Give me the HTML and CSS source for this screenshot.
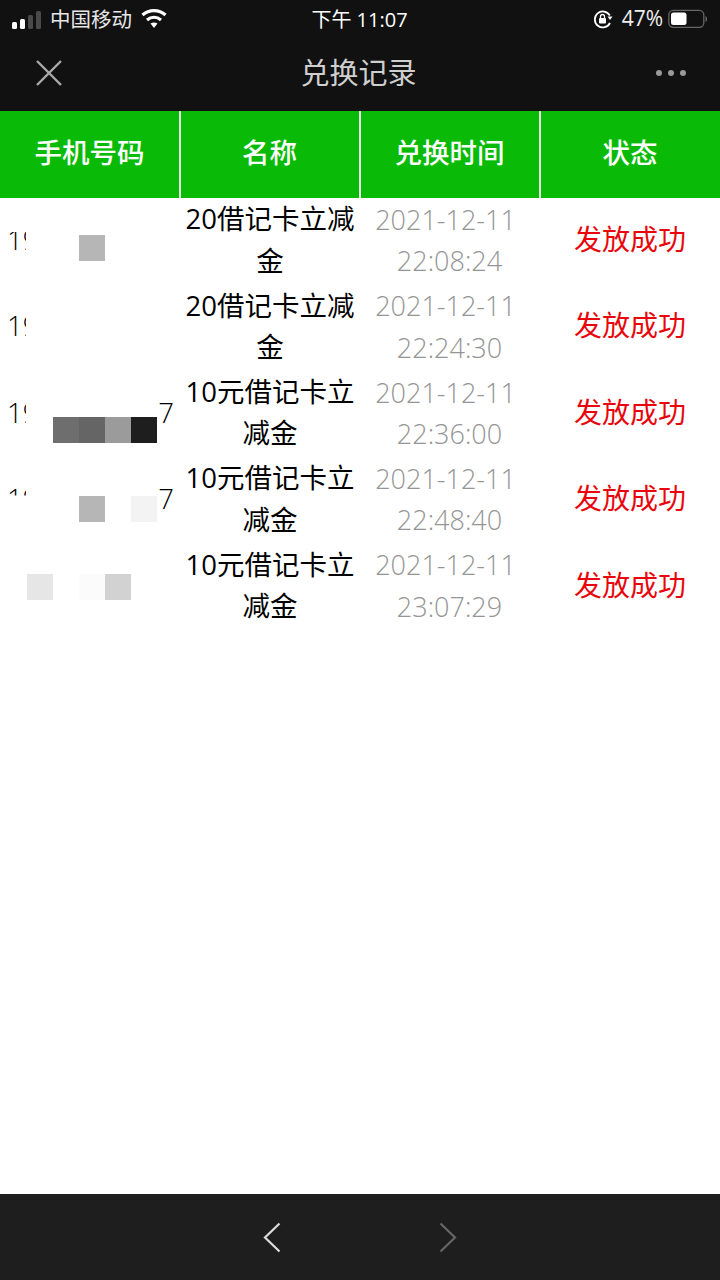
FILE: index.html
```html
<!DOCTYPE html>
<html lang="zh">
<head>
<meta charset="utf-8">
<title>兑换记录</title>
<link rel="stylesheet" href="styles.css">
</head>
<body>
<div class="page">
  <header class="top">
    <div class="status">
      <div class="status-side">
        <svg class="signal" width="30" height="20" viewBox="0 0 30 20"><rect x="0" y="12" width="5" height="7" rx="1.5" fill="#fff"/><rect x="8" y="9" width="5" height="10" rx="1.5" fill="#fff"/><rect x="16" y="5" width="5" height="14" rx="1.5" fill="#4a4a4a"/><rect x="24" y="1" width="5" height="18" rx="1.5" fill="#4a4a4a"/></svg>
        <span class="carrier">中国移动</span>
        <svg class="wifi" width="26" height="21" viewBox="0 0 26 21"><path d="M1.500 7C8 1.200 18 1.200 24.500 7" fill="none" stroke="#fff" stroke-width="3.200"/><path d="M6 12c4.200-3.400 9.800-3.400 14 0" fill="none" stroke="#fff" stroke-width="3.200"/><path d="M9.500 15.500c2.200-1.500 4.800-1.500 7 0L13 20z" fill="#fff"/></svg>
      </div>
      <div class="time">下午 11:07</div>
      <div class="status-side status-right">
        <svg class="lock" width="20" height="20" viewBox="0 0 20 20"><path d="M16.800 6.500A8 8 0 1 0 17 14" fill="none" stroke="#fff" stroke-width="1.800"/><path d="M14.500 7.500h5l-2.500 3.500z" fill="#fff"/><rect x="6" y="9" width="7" height="5.500" rx="1" fill="#fff"/><path d="M7.500 9V7.500a2 2 0 0 1 4 0V9" fill="none" stroke="#fff" stroke-width="1.300"/></svg>
        <span class="percent">47%</span>
        <svg class="battery" width="39" height="20" viewBox="0 0 39 20"><rect x="0.800" y="1.300" width="35" height="17" rx="4.500" fill="none" stroke="#666" stroke-width="1.300"/><rect x="3" y="3.500" width="15.500" height="12.500" rx="2.500" fill="#fff"/><path d="M37.500 7c1.200.5 1.500 1.500 1.500 3s-.3 2.500-1.500 3z" fill="#666"/></svg>
      </div>
    </div>
    <div class="nav">
      <svg class="nav-icon" width="26" height="26" viewBox="0 0 26 26"><path d="M1 1l24 24M25 1L1 25" stroke="#a9a9a9" stroke-width="2.400" fill="none"/></svg>
      <h1 class="title">兑换记录</h1>
      <svg class="nav-icon" width="32" height="8" viewBox="0 0 32 8"><circle cx="4" cy="4" r="3" fill="#9a9a9a"/><circle cx="16" cy="4" r="3" fill="#9a9a9a"/><circle cx="28" cy="4" r="3" fill="#9a9a9a"/></svg>
    </div>
  </header>

  <main class="content">
    <div class="thead">
      <div class="th">手机号码</div>
      <div class="th">名称</div>
      <div class="th">兑换时间</div>
      <div class="th">状态</div>
    </div>

    <div class="row">
      <div class="cell phone"><span class="frag clip-top">19</span>
        <div class="mosaic m-row1"><i class="b col3 g1"></i></div>
      </div>
      <div class="cell">20借记卡立减金</div>
      <div class="cell date"><span class="day">2021-12-11</span><span class="clock">22:08:24</span></div>
      <div class="cell state">发放成功</div>
    </div>

    <div class="row">
      <div class="cell phone"><span class="frag">19</span></div>
      <div class="cell">20借记卡立减金</div>
      <div class="cell date"><span class="day">2021-12-11</span><span class="clock">22:24:30</span></div>
      <div class="cell state">发放成功</div>
    </div>

    <div class="row">
      <div class="cell phone"><span class="frag">19</span><span class="last">7</span>
        <div class="mosaic m-row3"><i class="b col2 g2"></i><i class="b col3 g3"></i><i class="b col4 g4"></i><i class="b col5 g5"></i></div>
      </div>
      <div class="cell">10元借记卡立减金</div>
      <div class="cell date"><span class="day">2021-12-11</span><span class="clock">22:36:00</span></div>
      <div class="cell state">发放成功</div>
    </div>

    <div class="row">
      <div class="cell phone"><span class="frag clip-bottom">19</span><span class="last">7</span>
        <div class="mosaic m-row4"><i class="b col3 g1"></i><i class="b col5 g6"></i></div>
      </div>
      <div class="cell">10元借记卡立减金</div>
      <div class="cell date"><span class="day">2021-12-11</span><span class="clock">22:48:40</span></div>
      <div class="cell state">发放成功</div>
    </div>

    <div class="row">
      <div class="cell phone">
        <div class="mosaic m-row5"><i class="b col1 g7"></i><i class="b col3 g8"></i><i class="b col4 g9"></i></div>
      </div>
      <div class="cell">10元借记卡立减金</div>
      <div class="cell date"><span class="day">2021-12-11</span><span class="clock">23:07:29</span></div>
      <div class="cell state">发放成功</div>
    </div>
  </main>

  <footer class="bottom">
    <svg width="18" height="31" viewBox="0 0 18 31"><path d="M16.500 1.500L2 15.500l14.500 14" fill="none" stroke="#dcdcdc" stroke-width="2.200"/></svg>
    <svg width="18" height="31" viewBox="0 0 18 31"><path d="M1.500 1.500L16 15.500 1.500 29.500" fill="none" stroke="#666" stroke-width="2.200"/></svg>
  </footer>
</div>
</body>
</html>
```
FILE: styles.css
```css
* { box-sizing: border-box; }
html, body { margin: 0; padding: 0; background: #fff; }
body { font-family: "Open Sans", "Noto Sans CJK SC", sans-serif; }
.page { width: 720px; height: 1280px; display: flex; flex-direction: column; overflow: hidden; }

.top { background: #111112; height: 111px; flex: none; }
.status { height: 37px; display: grid; grid-template-columns: 1fr auto 1fr; align-items: center; padding: 0 13px 0 12px; color: #fff; }
.status-side { display: flex; align-items: center; }
.status-right { justify-content: flex-end; }
.carrier { font-size: 20.500px; margin-left: 8px; color: #e6e6e6; line-height: 36px; padding-bottom: 2px; }
.wifi { margin: -3px 0 0 9px; }
.time { font-size: 20px; line-height: 36px; }
.percent { font-size: 21px; margin-left: 9px; color: #eee; line-height: 36px; padding-bottom: 3px; }
.battery { margin-left: 5px; margin-top: -1px; }
.lock { margin-top: -1px; }
.nav { height: 74px; display: flex; align-items: center; justify-content: space-between; padding: 0 33px 0 36px; }
.nav-icon { margin-bottom: 2px; }
.title { margin: 0 0 2px; font-size: 29px; font-weight: 400; color: #cfcfcf; line-height: 40px; }

.content { flex: 1; background: #fff; }
.thead { display: grid; grid-template-columns: repeat(4, 180px); height: 87px; background: #09bb07; }
.th { display: flex; align-items: center; justify-content: center; color: #fff; font-size: 27.500px; font-weight: 500; border-right: 2px solid #e6f7e6; margin-right: -1px; padding-bottom: 7px; }
.th:last-child { border-right: 0; margin-right: 0; }

.row { display: grid; grid-template-columns: repeat(4, 180px); height: 86.400px; }
.cell { display: flex; align-items: center; justify-content: center; text-align: center; font-size: 27.500px; line-height: 41.400px; color: #000; padding: 0 4px 3px; }
.date { flex-direction: column; color: #959595; font-size: 27px; font-weight: 300; padding-bottom: 2px; }
.day { display: block; margin-right: 9px; }
.clock { display: block; margin-left: -1px; }
.state { color: #e8060c; font-size: 28px; }

.phone { position: relative; justify-content: space-between; padding: 0 6px 3px 7px; }
.frag { display: block; width: 19px; overflow: hidden; white-space: nowrap; text-align: left; font-weight: 300; }
.clip-top { clip-path: inset(13px 0 0 0); }
.clip-bottom { clip-path: inset(0 0 24px 0); }
.last { margin-left: auto; font-weight: 300; }

.mosaic { position: absolute; left: 26.500px; width: 130px; height: 26px; display: grid; grid-template-columns: repeat(5, 26px); }
.m-row1 { top: 37px; }
.m-row3 { top: 46px; }
.m-row4 { top: 38.500px; }
.m-row5 { top: 30px; }
.b { display: block; height: 26px; grid-row: 1; }
.col1 { grid-column: 1; }
.col2 { grid-column: 2; }
.col3 { grid-column: 3; }
.col4 { grid-column: 4; }
.col5 { grid-column: 5; }
.g1 { background: #b6b6b6; }
.g2 { background: #6e6e6e; }
.g3 { background: #656565; }
.g4 { background: #9b9b9b; }
.g5 { background: #1e1e1e; }
.g6 { background: #f3f3f3; }
.g7 { background: #e6e6e6; }
.g8 { background: #fbfbfb; }
.g9 { background: #d2d2d2; }

.bottom { height: 86px; flex: none; background: #1e1e1e; display: flex; align-items: center; justify-content: center; gap: 158px; }
```
